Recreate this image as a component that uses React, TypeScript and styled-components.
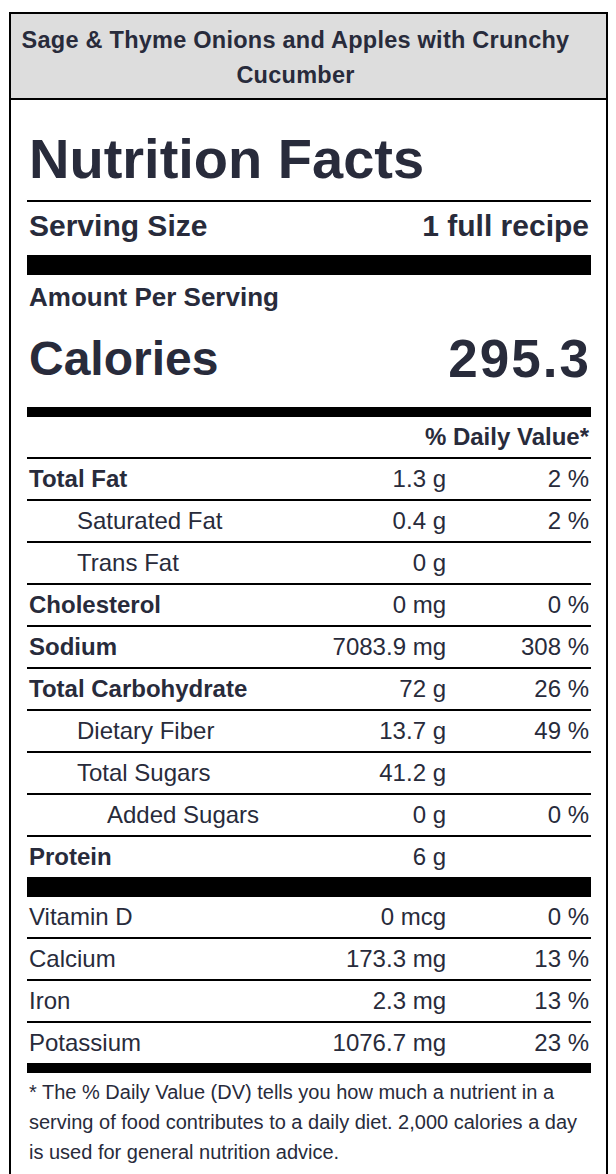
import React from "react";
import styled, { createGlobalStyle } from "styled-components";

interface Nutrient {
    name: string,
    amount: string,
    percent?: string,
    bold?: boolean,
    indent?: number,
    line?: boolean
}

const GlobalStyle = createGlobalStyle`
    body {
        margin: 0;
        background: #fff;
        font-family: "Liberation Sans", Arial, Helvetica, sans-serif;
        color: #282b3b;
    }
`;

const Page = styled.div`
    padding: 12px 8px 0 9px;
`;

const Label = styled.div`
    width: 599px;
    box-sizing: border-box;
    border: 2px solid #000;
    background: #fff;
`;

const Header = styled.div`
    background: #dddddd;
    border-bottom: 2px solid #000;
    padding: 9px 26px 5px 0;
    text-align: center;
    font-weight: bold;
    font-size: 23.5px;
    letter-spacing: 0.25px;
    line-height: 35px;
`;

const Body = styled.div`
    padding: 0 15px 10px 16px;
`;

const Title = styled.h1`
    margin: 0;
    padding: 27px 0 9px 2px;
    font-size: 56px;
    line-height: 64px;
    font-weight: bold;
    border-bottom: 2px solid #000;
`;

const SplitRow = styled.div<{ $h: number, $pb?: number, $size: number }>`
    display: flex;
    justify-content: space-between;
    align-items: center;
    box-sizing: border-box;
    height: ${p => p.$h}px;
    padding: 0 2px ${p => p.$pb || 0}px 2px;
    font-size: ${p => p.$size}px;
    font-weight: bold;
`;

const CalorieValue = styled.span`
    font-size: 53px;
    letter-spacing: 2px;
    margin-right: -2px;
`;

const Bar = styled.div<{ $h: number }>`
    height: ${p => p.$h}px;
    background: #000;
`;

const DvHead = styled.div`
    height: 40px;
    border-bottom: 2px solid #000;
    display: flex;
    align-items: center;
    justify-content: flex-end;
    padding-right: 2px;
    font-size: 24px;
    font-weight: bold;
`;

const Row = styled.div<{ $line: boolean }>`
    display: grid;
    grid-template-columns: 1fr 150px 143px;
    align-items: center;
    height: 40px;
    border-bottom: ${p => p.$line ? "2px solid #000" : "none"};
    font-size: 24px;
`;

const Name = styled.span<{ $bold?: boolean, $indent?: number }>`
    font-weight: ${p => p.$bold ? "bold" : "normal"};
    padding-left: ${p => 2 + (p.$indent || 0)}px;
    white-space: nowrap;
`;

const Num = styled.span`
    text-align: right;
    white-space: nowrap;
    padding-right: 2px;
`;

const Footnote = styled.p`
    margin: 0;
    padding: 4px 0 0 2px;
    font-size: 20px;
    line-height: 30px;
`;

const main: Nutrient[] = [
    { name: "Total Fat", amount: "1.3 g", percent: "2 %", bold: true, line: true },
    { name: "Saturated Fat", amount: "0.4 g", percent: "2 %", indent: 48, line: true },
    { name: "Trans Fat", amount: "0 g", indent: 48, line: true },
    { name: "Cholesterol", amount: "0 mg", percent: "0 %", bold: true, line: true },
    { name: "Sodium", amount: "7083.9 mg", percent: "308 %", bold: true, line: true },
    { name: "Total Carbohydrate", amount: "72 g", percent: "26 %", bold: true, line: true },
    { name: "Dietary Fiber", amount: "13.7 g", percent: "49 %", indent: 48, line: true },
    { name: "Total Sugars", amount: "41.2 g", indent: 48, line: true },
    { name: "Added Sugars", amount: "0 g", percent: "0 %", indent: 78, line: true },
    { name: "Protein", amount: "6 g", bold: true }
];

const extra: Nutrient[] = [
    { name: "Vitamin D", amount: "0 mcg", percent: "0 %", line: true },
    { name: "Calcium", amount: "173.3 mg", percent: "13 %", line: true },
    { name: "Iron", amount: "2.3 mg", percent: "13 %", line: true },
    { name: "Potassium", amount: "1076.7 mg", percent: "23 %" }
];

const NutrientRow = ({ n }: { n: Nutrient }) => (
    <Row $line={!!n.line}>
        <Name $bold={n.bold} $indent={n.indent}>{n.name}</Name>
        <Num>{n.amount}</Num>
        <Num>{n.percent}</Num>
    </Row>
);

const App = () => {
    return (
        <Page>
            <GlobalStyle />
            <Label>
                <Header>Sage &amp; Thyme Onions and Apples with Crunchy Cucumber</Header>
                <Body>
                    <Title>Nutrition Facts</Title>
                    <SplitRow $h={53} $pb={5} $size={30}>
                        <span>Serving Size</span>
                        <span>1 full recipe</span>
                    </SplitRow>
                    <Bar $h={20} />
                    <SplitRow $h={45} $size={26}>
                        <span>Amount Per Serving</span>
                    </SplitRow>
                    <SplitRow $h={87} $pb={10} $size={48}>
                        <span>Calories</span>
                        <CalorieValue>295.3</CalorieValue>
                    </SplitRow>
                    <Bar $h={10} />
                    <DvHead>% Daily Value*</DvHead>
                    {main.map(n => <NutrientRow key={n.name} n={n} />)}
                    <Bar $h={20} />
                    {extra.map(n => <NutrientRow key={n.name} n={n} />)}
                    <Bar $h={10} />
                    <Footnote>
                        * The % Daily Value (DV) tells you how much a nutrient in a serving of food contributes to a daily diet. 2,000 calories a day is used for general nutrition advice.
                    </Footnote>
                </Body>
            </Label>
        </Page>
    )
}

export default App
